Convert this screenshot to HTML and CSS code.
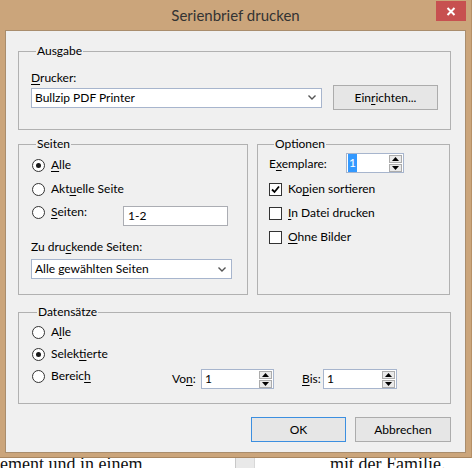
FILE: index.html
```html
<!DOCTYPE html>
<html lang="de">
<head>
<meta charset="utf-8">
<title>Serienbrief drucken</title>
<link rel="stylesheet" href="styles.css">
</head>
<body>
<div class="window">
  <div class="titlebar">
    <span class="title">Serienbrief drucken</span>
    <span class="close"><svg width="10" height="9" viewBox="0 0 10 9"><path d="M1.5 1 L8.5 8 M8.5 1 L1.5 8" stroke="#fff" stroke-width="2"/></svg></span>
  </div>
  <div class="client">
    <fieldset class="group ausgabe">
      <legend>Ausgabe</legend>
      <div class="lbl"><u>D</u>rucker:</div>
      <div class="printer-row">
        <div class="select printer">
          <span>Bullzip PDF Printer</span>
          <svg class="chev" width="8" height="5" viewBox="0 0 8 5"><path d="M0.5 0.5 L4 4 L7.5 0.5" fill="none" stroke="#555" stroke-width="1.4"/></svg>
        </div>
        <div class="btn setup">Ein<u>r</u>ichten...</div>
      </div>
    </fieldset>

    <div class="mid">
      <fieldset class="group seiten">
        <legend>Seiten</legend>
        <div class="opt first"><span class="radio on"></span><span><u>A</u>lle</span></div>
        <div class="opt"><span class="radio"></span><span>Akt<u>u</u>elle Seite</span></div>
        <div class="opt range">
          <div class="radio-item"><span class="radio"></span><span><u>S</u>eiten:</span></div>
          <div class="text pages">1-2</div>
        </div>
        <div class="lbl which">Zu dru<u>c</u>kende Seiten:</div>
        <div class="select which-sel">
          <span>Alle gewählten Seiten</span>
          <svg class="chev" width="8" height="5" viewBox="0 0 8 5"><path d="M0.5 0.5 L4 4 L7.5 0.5" fill="none" stroke="#555" stroke-width="1.4"/></svg>
        </div>
      </fieldset>

      <fieldset class="group optionen">
        <legend>Optionen</legend>
        <div class="copies">
          <span class="copies-lbl">E<u>x</u>emplare:</span>
          <div class="spin">
            <span class="val"><span class="sel">1</span></span>
            <span class="arrows">
              <span class="arr"><svg width="7" height="4" viewBox="0 0 7 4"><path d="M0 4 L3.5 0 L7 4 Z" fill="#000"/></svg></span>
              <span class="arr"><svg width="7" height="4" viewBox="0 0 7 4"><path d="M0 0 L3.5 4 L7 0 Z" fill="#000"/></svg></span>
            </span>
          </div>
        </div>
        <div class="chk-row"><span class="check on"><svg width="11" height="11" viewBox="0 0 11 11"><path d="M2 5.5 L4.5 8 L9 2.5" fill="none" stroke="#000" stroke-width="1.8"/></svg></span><span>Ko<u>p</u>ien sortieren</span></div>
        <div class="chk-row"><span class="check"></span><span><u>I</u>n Datei drucken</span></div>
        <div class="chk-row"><span class="check"></span><span><u>O</u>hne Bilder</span></div>
      </fieldset>
    </div>

    <fieldset class="group daten">
      <legend>Datensätze</legend>
      <div class="opt d1"><span class="radio"></span><span>A<u>l</u>le</span></div>
      <div class="opt d2"><span class="radio on"></span><span>Selek<u>t</u>ierte</span></div>
      <div class="opt d3">
        <div class="radio-item wide"><span class="radio"></span><span>Bereic<u>h</u></span></div>
        <div class="field">
          <span class="flbl">Vo<u>n</u>:</span>
          <div class="spin small">
            <span class="val">1</span>
            <span class="arrows">
              <span class="arr"><svg width="7" height="4" viewBox="0 0 7 4"><path d="M0 4 L3.5 0 L7 4 Z" fill="#000"/></svg></span>
              <span class="arr"><svg width="7" height="4" viewBox="0 0 7 4"><path d="M0 0 L3.5 4 L7 0 Z" fill="#000"/></svg></span>
            </span>
          </div>
        </div>
        <div class="field bis">
          <span class="flbl"><u>B</u>is:</span>
          <div class="spin small">
            <span class="val">1</span>
            <span class="arrows">
              <span class="arr"><svg width="7" height="4" viewBox="0 0 7 4"><path d="M0 4 L3.5 0 L7 4 Z" fill="#000"/></svg></span>
              <span class="arr"><svg width="7" height="4" viewBox="0 0 7 4"><path d="M0 0 L3.5 4 L7 0 Z" fill="#000"/></svg></span>
            </span>
          </div>
        </div>
      </div>
    </fieldset>

    <div class="buttons">
      <div class="btn ok">OK</div>
      <div class="btn cancel">Abbrechen</div>
    </div>
  </div>
  <div class="frame-bottom"></div>
</div>
<div class="doc">
  <div class="doc-left">ement und in einem</div>
  <div class="doc-bar"></div>
  <div class="doc-right">mit der Familie.</div>
</div>
</body>
</html>
```
FILE: styles.css
```css
* { box-sizing: border-box; }
html, body {
  margin: 0;
  padding: 0;
}
body {
  width: 472px;
  height: 468px;
  overflow: hidden;
  background: #fff;
  font-family: Lato, "Noto Sans", sans-serif;
  font-size: 12px;
  color: #000;
}
u { text-decoration: underline; text-underline-offset: 2px; }

.window {
  background: #cba57b;
  padding: 0 5px;
  border-right: 1px solid #b69066;
}
.titlebar {
  height: 30px;
  display: grid;
  grid-template-columns: 1fr auto 1fr;
  align-items: start;
}
.title {
  grid-column: 2;
  font-size: 15px;
  color: #333;
  line-height: 30px;
  height: 30px;
}
.close {
  grid-column: 3;
  justify-self: end;
  margin-top: 1px;
  width: 30px;
  height: 20px;
  background: #c75050;
  display: flex;
  align-items: center;
  justify-content: center;
}
.client {
  background: #f0f0f0;
  border: 1px solid #a98d6d;
  height: 423px;
  padding: 12px 14px 0 12px;
}
.frame-bottom {
  height: 5px;
  margin: 0 -5px;
  border-bottom: 1px solid #a88660;
}

.group {
  margin: 0;
  border: 1px solid #b1b1b1;
  padding: 0;
  min-width: 0;
}
.group legend {
  padding: 0 1px;
  margin-left: 5px;
  line-height: 16px;
  height: 16px;
}
.lbl { line-height: 15px; height: 15px; }

/* Ausgabe */
.ausgabe {
  height: 87px;
  padding: 11px 0 0 12px;
}
.printer-row {
  display: flex;
  align-items: center;
  height: 25px;
}
.select {
  height: 20px;
  border: 1px solid #a7b5cd;
  background: #fff;
  display: flex;
  align-items: center;
  justify-content: space-between;
  padding: 0 5px 0 3px;
  line-height: 16px;
}
.printer { width: 291px; }
.chev { flex: none; }
.btn {
  height: 25px;
  border: 1px solid #acacac;
  background: #e6e6e6;
  display: flex;
  align-items: center;
  justify-content: center;
}
.setup { width: 105px; margin-left: 11px; }

/* middle */
.mid {
  display: flex;
  margin-top: 6px;
  gap: 9px;
}
.seiten {
  width: 230px;
  height: 159px;
  padding: 5px 0 0 12px;
}
.opt {
  display: flex;
  align-items: center;
  height: 16px;
  line-height: 16px;
  margin-left: 1px;
}
.seiten .opt + .opt { margin-top: 8px; }
.seiten .opt.range { margin-top: 7px; align-items: flex-start; height: 22px; }
.radio-item { display: flex; align-items: center; width: 91px; height: 16px; }
.radio {
  width: 13px;
  height: 13px;
  border: 1px solid #333;
  border-radius: 50%;
  background: #fff;
  margin-right: 6px;
  flex: none;
  display: flex;
  align-items: center;
  justify-content: center;
}
.radio.on::after {
  content: "";
  width: 5px;
  height: 5px;
  border-radius: 50%;
  background: #1a1a1a;
}
.text {
  border: 1px solid #abadb3;
  background: #fff;
  height: 20px;
  line-height: 18px;
  padding-left: 4px;
}
.pages { width: 105px; margin-top: 2px; }
.which { margin-top: 13px; height: 16px; line-height: 16px; }
.which-sel { width: 201px; margin-top: 4px; }

.optionen {
  width: 193px;
  height: 159px;
  padding: 1px 0 0 11px;
}
.copies {
  display: flex;
  align-items: center;
  height: 20px;
}
.copies-lbl { width: 77px; }
.spin {
  width: 58px;
  height: 20px;
  border: 1px solid #a7b5cd;
  background: #fff;
  display: flex;
  justify-content: space-between;
  padding: 0 1px 0 0;
}
.val {
  display: flex;
  align-items: stretch;
  padding-left: 1px;
  line-height: 18px;
}
.small .val { padding-left: 3px; }
.sel {
  background: #3399ff;
  color: #fff;
  padding: 0 1px;
}
.arrows {
  display: flex;
  flex-direction: column;
  justify-content: center;
  gap: 1px;
}
.arr {
  width: 13px;
  height: 8px;
  border: 1px solid #acacac;
  background: #eaeaea;
  display: flex;
  align-items: center;
  justify-content: center;
}
.chk-row {
  display: flex;
  align-items: center;
  height: 24px;
  line-height: 16px;
}
.copies + .chk-row { margin-top: 4px; }
.check {
  width: 13px;
  height: 13px;
  border: 1px solid #333;
  background: #fff;
  margin-right: 6px;
  display: flex;
  align-items: center;
  justify-content: center;
}

/* Datensätze */
.daten {
  margin-top: 9px;
  height: 100px;
  padding: 4px 0 0 13px;
}
.daten .opt { margin-left: 0; }
.daten .opt + .opt { margin-top: 6px; }
.daten .d3 { align-items: flex-start; height: 21px; }
.radio-item.wide { width: 140px; }
.field {
  display: flex;
  align-items: center;
  margin-top: 1px;
  height: 20px;
}
.flbl { width: 29px; }
.small { width: 73px; }
.bis { margin-left: 28px; }
.bis .flbl { width: 21px; }
.bis .small { width: 74px; }

.buttons {
  display: flex;
  justify-content: flex-end;
  gap: 9px;
  margin-top: 13px;
}
.ok { width: 95px; border-color: #3c8fe0; }
.cancel { width: 96px; }

/* background document */
.doc {
  display: flex;
  height: 10px;
  overflow: hidden;
  font-family: "Liberation Serif", serif;
  font-size: 18px;
  line-height: 12px;
  color: #111;
}
.doc-left { width: 235px; white-space: nowrap; overflow: hidden; }
.doc-bar {
  width: 20px;
  background: #e9e9e9;
  border-left: 1px solid #c8c8c8;
  border-right: 1px solid #d8d8d8;
}
.doc-right { padding-left: 75px; white-space: nowrap; }
```
